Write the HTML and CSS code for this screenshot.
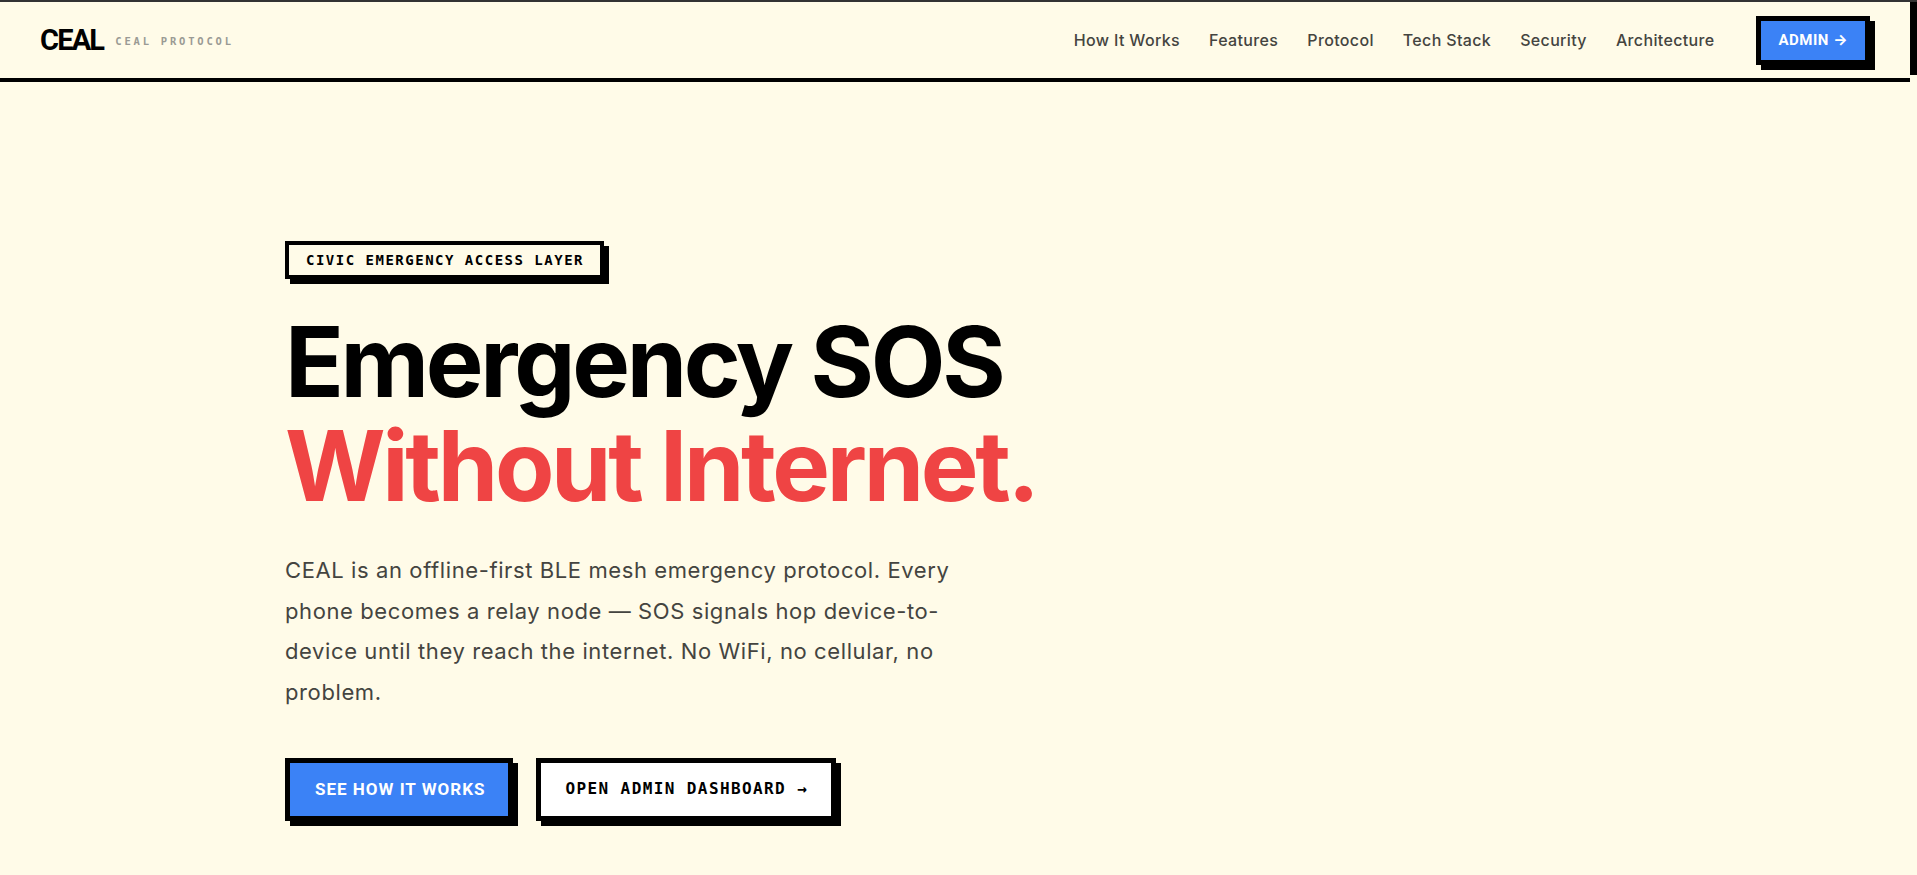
FILE: index.html
```html
<!DOCTYPE html>
<html lang="en">
<head>
<meta charset="utf-8">
<title>CEAL — Civic Emergency Access Layer</title>
<link rel="stylesheet" href="styles.css">
</head>
<body>
<div class="topline"></div>
<div class="frame">
  <div class="page">
    <header class="header">
      <div class="brand">
        <span class="logo">CEAL</span>
        <span class="tag">CEAL PROTOCOL</span>
      </div>
      <nav class="nav">
        <a class="nav-link" href="#">How It Works</a>
        <a class="nav-link" href="#">Features</a>
        <a class="nav-link" href="#">Protocol</a>
        <a class="nav-link" href="#">Tech Stack</a>
        <a class="nav-link" href="#">Security</a>
        <a class="nav-link" href="#">Architecture</a>
        <a class="btn btn-admin" href="#">ADMIN →</a>
      </nav>
    </header>
    <main class="hero">
      <div class="container">
        <div class="badge">CIVIC EMERGENCY ACCESS LAYER</div>
        <h1 class="title">
          <span class="title-line">Emergency SOS</span>
          <span class="title-line accent">Without Internet.</span>
        </h1>
        <p class="lead">CEAL is an offline-first BLE mesh emergency protocol. Every phone becomes a relay node — SOS signals hop device-to-device until they reach the internet. No WiFi, no cellular, no problem.</p>
        <div class="actions">
          <a class="btn btn-primary" href="#">SEE HOW IT WORKS</a>
          <a class="btn btn-secondary" href="#">OPEN ADMIN DASHBOARD →</a>
        </div>
      </div>
    </main>
  </div>
  <div class="rail"><div class="thumb"></div></div>
</div>
</body>
</html>
```
FILE: styles.css
```css
* { box-sizing: border-box; }
html, body {
  margin: 0;
  padding: 0;
  height: 875px;
  overflow: hidden;
}
body {
  background: #fffbe8;
  font-family: Inter, "Noto Sans", sans-serif;
  color: #000;
  display: flex;
  flex-direction: column;
}
a { text-decoration: none; }

.topline {
  height: 2px;
  background: #333;
  flex: none;
}
.frame {
  flex: 1;
  display: flex;
  min-height: 0;
}
.page {
  flex: 1;
  display: flex;
  flex-direction: column;
  min-width: 0;
}
.rail {
  width: 7px;
  flex: none;
}
.thumb {
  height: 73px;
  background: #000;
}

/* Header */
.header {
  height: 80px;
  border-bottom: 4px solid #000;
  display: flex;
  align-items: center;
  justify-content: space-between;
  padding: 0 40px 0 40px;
  flex: none;
}
.brand {
  display: flex;
  align-items: center;
  gap: 12px;
}
.logo {
  font-family: Roboto, "Liberation Sans", sans-serif;
  font-weight: 700;
  font-size: 29px;
  letter-spacing: -1.8px;
  line-height: 1;
}
.tag {
  font-family: "DejaVu Sans Mono", monospace;
  font-weight: 700;
  font-size: 10.5px;
  letter-spacing: 2.8px;
  color: #9a9a94;
  padding-top: 1px;
}
.nav {
  display: flex;
  align-items: center;
  gap: 29px;
}
.nav-link {
  font-size: 16px;
  font-weight: 500;
  color: #444440;
  letter-spacing: 0.35px;
}
.nav .btn-admin { margin-left: 12px; }

/* Buttons */
.btn {
  display: inline-block;
  border: 5px solid #000;
  box-shadow: 5px 5px 0 #000;
  font-family: Roboto, Inter, sans-serif;
  font-weight: 700;
  letter-spacing: 0.5px;
  line-height: 1;
}
.btn-admin {
  background: #3b82f6;
  color: #fff;
  font-size: 15px;
  padding: 12px 17px 12px 18px;
}
.btn-primary {
  background: #3b82f6;
  color: #fff;
  font-size: 17px;
  letter-spacing: 1px;
  padding: 18px 23px 18px 25px;
}
.btn-secondary {
  background: #fff;
  color: #000;
  font-family: "DejaVu Sans Mono", monospace;
  font-size: 16px;
  letter-spacing: 1.4px;
  padding: 18px 23px 18px 24px;
}

/* Hero */
.hero {
  flex: 1;
  padding-top: 159px;
}
.container {
  max-width: 1340px;
  margin: 0 auto;
}
.badge {
  display: inline-block;
  border: 4px solid #000;
  box-shadow: 5px 5px 0 #000;
  font-family: "DejaVu Sans Mono", monospace;
  font-weight: 700;
  font-size: 14px;
  letter-spacing: 1.5px;
  padding: 8px 16px 8px 17px;
  line-height: 14px;
}
.title {
  margin: 31px 0 0 0;
  font-size: 97px;
  font-weight: 700;
  line-height: 104px;
  letter-spacing: -3.3px;
}
.title-line { display: block; }
.accent { color: #ef4444; }
.lead {
  margin: 32px 0 0 0;
  max-width: 705px;
  font-size: 22px;
  letter-spacing: 0.6px;
  line-height: 40.5px;
  color: #444440;
}
.actions {
  margin-top: 46px;
  display: flex;
  gap: 23px;
}
```
